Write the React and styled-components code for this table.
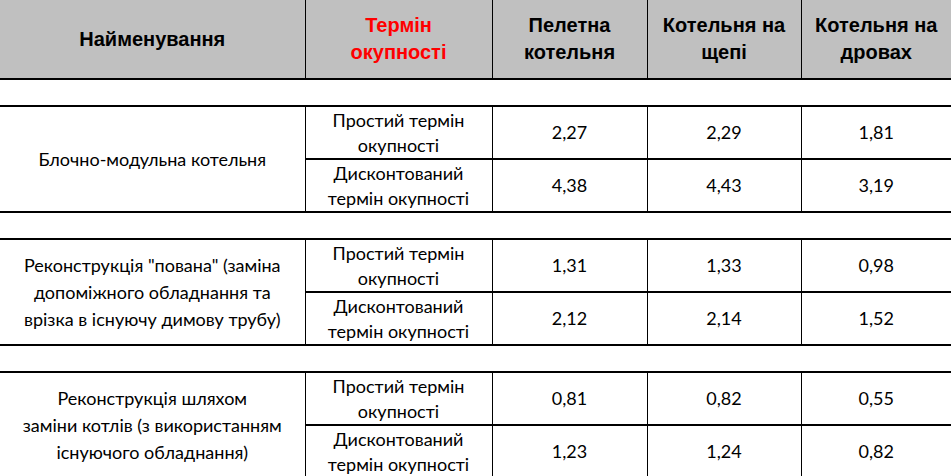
import React from 'react'
import styled, { createGlobalStyle } from 'styled-components'

const GlobalStyle = createGlobalStyle`
    html, body {
        margin: 0;
        padding: 0;
        background: #ffffff;
        overflow: hidden;
    }
`

const Table = styled.table`
    width: 951px;
    border-collapse: collapse;
    table-layout: fixed;
    font-family: Lato, "Noto Sans", sans-serif;
    color: #000;
`

const HeadCell = styled.th`
    height: 78px;
    padding: 0 12px;
    background: #c0c0c0;
    border-bottom: 2px solid #000;
    border-right: ${ p => p.last ? 'none' : '1px solid #000' };
    font-family: "Liberation Sans", Arial, sans-serif;
    font-weight: bold;
    font-size: 20px;
    line-height: 27px;
    text-align: center;
    color: ${ p => p.accent ? '#ff0000' : '#000' };
`

const Gap = styled.td`
    height: 25px;
    padding: 0;
    border-top: 2px solid #000;
    border-bottom: 2px solid #000;
`

const Cell = styled.td`
    height: 51px;
    padding: 0 4px;
    border-top: ${ p => p.divider ? '1px' : '2px' } solid #000;
    border-bottom: 2px solid #000;
    border-right: ${ p => p.last ? 'none' : '1px solid #000' };
    font-size: 18px;
    line-height: 25px;
    text-align: center;
    vertical-align: middle;
`

const NameCell = styled(Cell)`
    line-height: 27px;
    padding: 0 10px;
`

const columns = [
    { title: 'Найменування', width: 305 },
    { title: 'Термін окупності', width: 187, accent: true },
    { title: 'Пелетна котельня', width: 155 },
    { title: 'Котельня на щепі', width: 154 },
    { title: 'Котельня на дровах', width: 150 },
]

const groups = [
    {
        name: 'Блочно-модульна котельня',
        simple: [ '2,27', '2,29', '1,81' ],
        discounted: [ '4,38', '4,43', '3,19' ],
    },
    {
        name: 'Реконструкція "пована" (заміна допоміжного обладнання та врізка в існуючу димову трубу)',
        simple: [ '1,31', '1,33', '0,98' ],
        discounted: [ '2,12', '2,14', '1,52' ],
    },
    {
        name: <>Реконструкція шляхом<br />заміни котлів (з використанням існуючого обладнання)</>,
        simple: [ '0,81', '0,82', '0,55' ],
        discounted: [ '1,23', '1,24', '0,82' ],
    },
]

const Values = ({ values, divider }) => values.map( ( v, i ) => (
    <Cell key={ i } divider={ divider } last={ i === values.length - 1 }>{ v }</Cell>
))

export default () => (
    <>
        <GlobalStyle />
        <Table>
            <colgroup>
                { columns.map( c => <col key={ c.title } style={{ width: c.width }} /> ) }
            </colgroup>
            <thead>
                <tr>
                    { columns.map( ( c, i ) => (
                        <HeadCell key={ c.title } accent={ c.accent } last={ i === columns.length - 1 }>
                            { c.title }
                        </HeadCell>
                    )) }
                </tr>
            </thead>
            <tbody>
                { groups.map( ( g, i ) => (
                    <React.Fragment key={ i }>
                        <tr><Gap colSpan={ 5 } /></tr>
                        <tr>
                            <NameCell rowSpan={ 2 }>{ g.name }</NameCell>
                            <Cell>Простий термін окупності</Cell>
                            <Values values={ g.simple } />
                        </tr>
                        <tr>
                            <Cell divider>Дисконтований термін окупності</Cell>
                            <Values values={ g.discounted } divider />
                        </tr>
                    </React.Fragment>
                )) }
            </tbody>
        </Table>
    </>
)
